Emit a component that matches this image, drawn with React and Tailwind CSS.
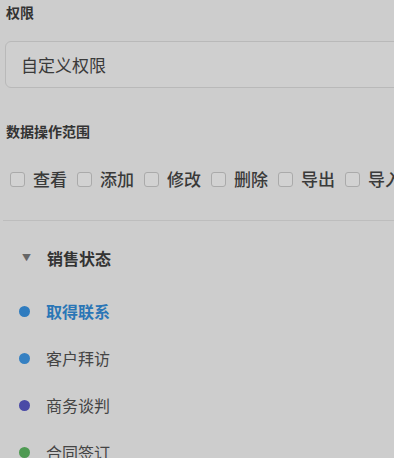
import React from 'react';

const ops = ['查看', '添加', '修改', '删除', '导出', '导入'];

const stages = [
  { name: '取得联系', dot: 'bg-[#2f7cbf]', text: 'text-[#2a76b6] font-bold', },
  { name: '客户拜访', dot: 'bg-[#3580c2]', text: 'text-[#444]' },
  { name: '商务谈判', dot: 'bg-[#4a4aa6]', text: 'text-[#444]' },
  { name: '合同签订', dot: 'bg-[#4e9a52]', text: 'text-[#444]' },
];

const App = () => {
  return (
    <div
      className="w-[394px] h-[458px] overflow-hidden bg-[#cdcdcd] text-[#333]"
      style={{ fontFamily: '"Noto Sans CJK SC", "Noto Sans", sans-serif' }}
    >
      {/* 权限 */}
      <div className="pl-[6px] pt-[2px] h-[20px] leading-[20px] text-[14px] font-bold text-[#333]">权限</div>

      <div className="mt-[21px] ml-[5px] w-[420px] h-[47px] rounded-[6px] border border-[#b9b9b9] bg-[#cfcfcf] flex items-center pl-[15px]">
        <span className="text-[17px] text-[#3a3a3a]">自定义权限</span>
      </div>

      {/* 数据操作范围 */}
      <div className="mt-[33px] pl-[6px] h-[20px] leading-[20px] text-[14px] font-bold text-[#333]">数据操作范围</div>

      <div className="mt-[27px] pl-[10px] flex items-center whitespace-nowrap">
        {ops.map((op) => (
          <div key={op} className="flex items-center mr-[10px] shrink-0">
            <span className="w-[15px] h-[15px] rounded-[3px] border border-[#aaa] bg-[#d2d2d2]" />
            <span className="ml-[8px] text-[17px] leading-[22px] font-medium text-[#3a3a3a]">{op}</span>
          </div>
        ))}
      </div>

      {/* divider */}
      <div className="mt-[30px] ml-[3px] h-px bg-[#bdbdbd]" />

      {/* 销售状态 */}
      <div className="mt-[25px] flex items-center h-[24px]">
        <span className="ml-[22px] text-[9px] text-[#666]">▼</span>
        <span className="ml-[16px] text-[16px] font-bold text-[#333]">销售状态</span>
      </div>

      <div className="mt-[29px] flex flex-col gap-[23px]">
        {stages.map((s) => (
          <div key={s.name} className="flex items-center h-[24px]">
            <span className={`ml-[19px] w-[11px] h-[11px] rounded-full ${s.dot}`} />
            <span className={`ml-[16px] text-[16px] ${s.text}`}>{s.name}</span>
          </div>
        ))}
      </div>
    </div>
  );
};

export default App;
